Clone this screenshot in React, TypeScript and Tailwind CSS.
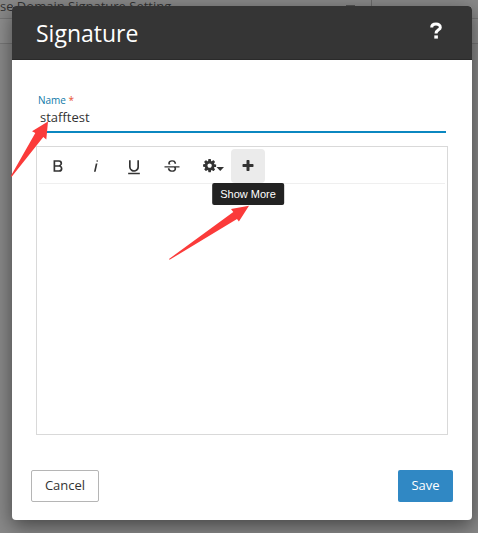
import type { ReactNode } from 'react'

const formatTools = [
  {
    name: 'Bold',
    path: 'M15.25,11.8h0A3.68,3.68,0,0,0,17,9a3.93,3.93,0,0,0-3.86-4H6.65V19h7a3.74,3.74,0,0,0,3.7-3.78V15.1A3.64,3.64,0,0,0,15.25,11.8ZM8.65,7h4.2a2.09,2.09,0,0,1,2,1.3,2.09,2.09,0,0,1-1.37,2.61,2.23,2.23,0,0,1-.63.09H8.65Zm4.6,10H8.65V13h4.6a2.09,2.09,0,0,1,2,1.3,2.09,2.09,0,0,1-1.37,2.61A2.23,2.23,0,0,1,13.25,17Z',
  },
  {
    name: 'Italic',
    path: 'M11.76,9h2l-2.2,10h-2Zm1.68-4a1,1,0,1,0,1,1,1,1,0,0,0-1-1Z',
  },
  {
    name: 'Underline',
    path: 'M19,20v2H5V20Zm-3-6.785a4,4,0,0,1-5.74,3.4A3.75,3.75,0,0,1,8,13.085V5.005H6v8.21a6,6,0,0,0,8,5.44,5.851,5.851,0,0,0,4-5.65v-8H16Z',
  },
  {
    name: 'Strikethrough',
    path: 'M3,12.20294H21v1.5H16.63422a3.59782,3.59782,0,0,1,.34942,1.5929,3.252,3.252,0,0,1-1.31427,2.6997A5.55082,5.55082,0,0,1,12.20251,19a6.4421,6.4421,0,0,1-2.62335-.539,4.46335,4.46335,0,0,1-1.89264-1.48816,3.668,3.668,0,0,1-.67016-2.15546V14.704H9.02v.11334a2.18275,2.18275,0,0,0,.85413,1.83069,3.69,3.69,0,0,0,2.32836.67926,3.38778,3.38778,0,0,0,2.07666-.5462,1.73346,1.73346,0,0,0,.7013-1.46655,1.69749,1.69749,0,0,0-.647-1.43439,3.00525,3.00525,0,0,0-.27491-.17725H3ZM16.34473,7.05981A4.18163,4.18163,0,0,0,14.6236,5.5462,5.627,5.627,0,0,0,12.11072,5,5.16083,5.16083,0,0,0,8.74719,6.06213,3.36315,3.36315,0,0,0,7.44006,8.76855a3.22923,3.22923,0,0,0,.3216,1.42786h2.59668c-.08338-.05365-.18537-.10577-.25269-.16064a1.60652,1.60652,0,0,1-.65283-1.30036,1.79843,1.79843,0,0,1,.68842-1.5108,3.12971,3.12971,0,0,1,1.96948-.55243,3.04779,3.04779,0,0,1,2.106.6687,2.35066,2.35066,0,0,1,.736,1.83258v.11341h2.00317V9.17346A3.90013,3.90013,0,0,0,16.34473,7.05981Z',
  },
]

const cogPath =
  'M1152 896q0-106-75-181t-181-75-181 75-75 181 75 181 181 75 181-75 75-181zm512-109v222q0 12-8 23t-20 13l-185 28q-19 54-39 91 35 50 107 138 10 12 10 25t-9 23q-27 37-99 108t-94 71q-12 0-26-9l-138-108q-44 23-91 38-16 136-29 186-7 28-36 28h-222q-14 0-24.500-8.500t-11.500-21.500l-28-184q-49-16-90-37l-141 107q-10 9-25 9-14 0-25-11-126-114-165-168-7-10-7-23 0-12 8-23 15-21 51-66.500t54-70.500q-27-50-41-99l-183-27q-13-2-21-12.500t-8-23.500v-222q0-12 8-23t19-13l186-28q14-46 39-92-40-57-107-138-10-12-10-24 0-10 9-23 26-36 98.500-107.500t94.500-71.500q13 0 26 10l138 107q44-23 91-38 16-136 29-186 7-28 36-28h222q14 0 24.500 8.500t11.500 21.500l28 184q49 16 90 37l142-107q9-9 24-9 13 0 25 10 129 119 165 170 7 8 7 22 0 12-8 23-15 21-51 66.500t-54 70.500q26 50 41 98l183 28q13 2 21 12.500t8 23.500z'

const plusPath =
  'M1600 736v192q0 40-28 68t-68 28h-416v416q0 40-28 68t-68 28h-192q-40 0-68-28t-28-68v-416h-416q-40 0-68-28t-28-68v-192q0-40 28-68t68-28h416v-416q0-40 28-68t68-28h192q40 0 68 28t28 68v416h416q40 0 68 28t28 68z'

function ToolButton({ label, children }: { label: string; children: ReactNode }) {
  return (
    <button type="button" aria-label={label} className="flex size-[34px] items-center justify-center rounded">
      {children}
    </button>
  )
}

function Toolbar() {
  return (
    <div className="mx-0.5 flex h-[37px] gap-1 border-b border-[#efefef] px-0.5 pt-0.5 text-[#333]">
      {formatTools.map((tool) => (
        <ToolButton key={tool.name} label={tool.name}>
          <svg viewBox="0 0 24 24" fill="currentColor" className="size-5">
            <path d={tool.path} />
          </svg>
        </ToolButton>
      ))}
      <ToolButton label="More options">
        <svg viewBox="0 0 28 16" fill="currentColor" className="h-4 w-7 shrink-0">
          <g transform="translate(6 0) scale(0.0085)">
            <path d={cogPath} />
          </g>
          <path d="M20.500 9h7.500l-3.750 4z" />
        </svg>
      </ToolButton>

      {/* Show more + tooltip */}
      <div className="relative">
        <button
          type="button"
          aria-label="Show More"
          className="flex size-[34px] items-center justify-center rounded bg-[#ebebeb]"
        >
          <svg viewBox="0 0 1792 1792" fill="currentColor" className="size-[14px]">
            <path d={plusPath} />
          </svg>
        </button>
        <span
          role="tooltip"
          className="absolute top-full left-1/2 -translate-x-1/2 rounded-xs bg-[#222] px-2 font-['Liberation_Sans',sans-serif] text-[11px] leading-[22px] whitespace-nowrap text-white"
        >
          Show More
        </span>
      </div>
    </div>
  )
}

export default function App() {
  return (
    <div className="relative min-h-screen overflow-hidden bg-[#898989] font-['Open_Sans','Noto_Sans',sans-serif] text-[#333]">
      {/* Page behind the dialog */}
      <div className="absolute inset-x-0 top-0" aria-hidden="true">
        <div className="flex h-[19px] border-b border-[#777]">
          <p className="flex w-[372px] items-start justify-between border-r border-[#6c6c6c] pr-4 text-[13px] leading-[13px] whitespace-nowrap">
            se Domain Signature Setting
            <span className="mt-[5px] h-0.5 w-[9px] bg-[#555]" />
          </p>
        </div>
        <div className="h-[25px] border-b border-[#777] bg-[#8e8e8e]" />
      </div>

      <div className="relative pt-1.5 pr-1.5 pb-3 pl-3">
        <section
          role="dialog"
          aria-labelledby="dialog-title"
          className="rounded-[4px] bg-white shadow-[0_6px_20px_rgba(0,0,0,0.5)]"
        >
          <header className="flex h-[54px] items-center justify-between rounded-t-[4px] border-b border-[#2a2a2a] bg-[#353535] px-6 text-white">
            <h1 id="dialog-title" className="text-[23px] leading-8">
              Signature
            </h1>
            <button type="button" aria-label="Help" className="mr-1.5 mb-1">
              <svg viewBox="0 0 12 17" fill="none" stroke="currentColor" strokeWidth={3} className="h-[17px] w-3">
                <path d="M1.700 5.600C1.700 3.300 3.400 2 6 2s4.300 1.300 4.300 3.400C10.300 8 6 7.800 6 11.500" />
                <path d="M4.300 15h3.600" strokeWidth={3.200} />
              </svg>
            </button>
          </header>

          <div className="px-6 pt-8">
            <div className="mr-0.5 mb-[13px] flex flex-col border-b-2 border-[#0b87c0] pb-1.5">
              <label htmlFor="signature-name" className="pl-0.5 text-[10px] leading-4 text-[#0f7aa8]">
                Name <span className="text-[#e8502f]">*</span>
              </label>
              <input
                id="signature-name"
                type="text"
                defaultValue="stafftest"
                className="h-[17px] w-full pl-1 text-[13px] leading-4 outline-none"
              />
            </div>

            <div className="border border-[#d9d9d9]">
              <Toolbar />
              <textarea
                aria-label="Signature content"
                className="block h-[250px] w-full resize-none p-3 text-[13px] outline-none"
              />
            </div>
          </div>

          <footer className="flex justify-between px-[19px] pt-[35px] pb-[18px] text-[13px]">
            <button type="button" className="h-8 min-w-[68px] rounded-xs border border-[#b5b5b5] px-3">
              Cancel
            </button>
            <button type="button" className="h-8 min-w-[55px] rounded-xs bg-[#3088c4] px-3 text-white">
              Save
            </button>
          </footer>
        </section>
      </div>

      {/* Callout arrows */}
      <svg
        viewBox="0 0 260 270"
        fill="#fb3b3a"
        className="pointer-events-none absolute top-0 left-0 h-[270px] w-[260px]"
        aria-hidden="true"
      >
        <path d="M48 121.500L32 131.300l3.300 1.700L10.700 176.300l1 .5L43.300 137l3 2.500z" />
        <path d="M249 205.700L231 209l2.300 3L169 259l.6.800L237 219l1.900 2.500z" />
      </svg>
    </div>
  )
}
